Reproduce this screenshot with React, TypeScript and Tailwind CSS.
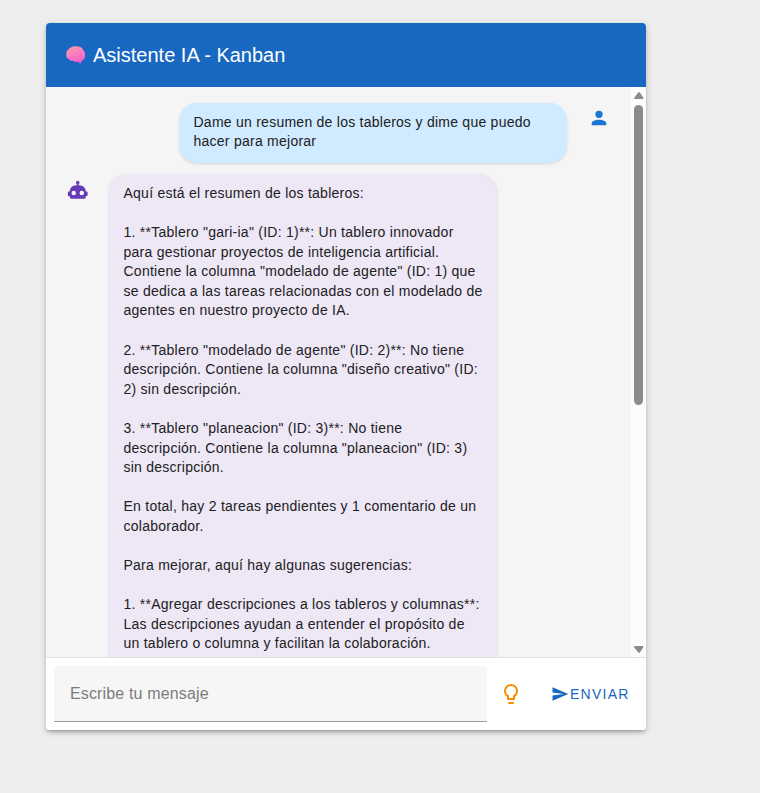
import React from "react";

const ACCOUNT =
  "M12,4A4,4 0 0,1 16,8A4,4 0 0,1 12,12A4,4 0 0,1 8,8A4,4 0 0,1 12,4M12,14C16.42,14 20,15.79 20,18V20H4V18C4,15.79 7.58,14 12,14Z";
const ROBOT =
  "M12,2A2,2 0 0,1 14,4C14,4.74 13.6,5.39 13,5.73V7H14A7,7 0 0,1 21,14H22A1,1 0 0,1 23,15V18A1,1 0 0,1 22,19H21V20A2,2 0 0,1 19,22H5A2,2 0 0,1 3,20V19H2A1,1 0 0,1 1,18V15A1,1 0 0,1 2,14H3A7,7 0 0,1 10,7H11V5.73C10.4,5.39 10,4.74 10,4A2,2 0 0,1 12,2M7.5,13A2.5,2.5 0 0,0 5,15.5A2.5,2.5 0 0,0 7.5,18A2.5,2.5 0 0,0 10,15.5A2.5,2.5 0 0,0 7.5,13M16.5,13A2.5,2.5 0 0,0 14,15.5A2.5,2.5 0 0,0 16.5,18A2.5,2.5 0 0,0 19,15.5A2.5,2.5 0 0,0 16.5,13Z";
const BULB =
  "M12,2A7,7 0 0,1 19,9C19,11.38 17.81,13.47 16,14.74V17A1,1 0 0,1 15,18H9A1,1 0 0,1 8,17V14.74C6.19,13.47 5,11.38 5,9A7,7 0 0,1 12,2M9,21V20H15V21A1,1 0 0,1 14,22H10A1,1 0 0,1 9,21M12,4A5,5 0 0,0 7,9C7,11.05 8.23,12.81 10,13.58V16H14V13.58C15.77,12.81 17,11.05 17,9A5,5 0 0,0 12,4Z";
const SEND = "M2,21L23,12L2,3V10L17,12L2,14V21Z";

function Icon({ path, className }: { path: string; className: string }) {
  return (
    <svg viewBox="0 0 24 24" className={className} fill="currentColor" aria-hidden="true">
      <path d={path} />
    </svg>
  );
}

function Brain() {
  return (
    <svg viewBox="0 0 20 18" className="h-[18px] w-[19.5px] shrink-0" aria-hidden="true">
      <defs>
        <linearGradient id="brain" x1="0.3" y1="0" x2="0.6" y2="1">
          <stop offset="0" stopColor="#f99aa9" />
          <stop offset="0.6" stopColor="#fb79c6" />
          <stop offset="1" stopColor="#f65bd2" />
        </linearGradient>
      </defs>
      <path
        fill="url(#brain)"
        d="M5 1.4C7 0 10-.1 12 .4C14.8.5 17 2 18 4.5C19.4 6 20 8.8 19.5 11C19 13 17.4 14.4 15.8 14.7L15.5 17.1Q14.7 18 13.8 17.3L12.7 15.8C10.8 16.4 8.2 16.2 7 14.9C5.2 15.3 3.6 14.6 3 13C1 12.8 0 10.6.4 8.5C0 5.5 1.3 3.6 3 3Q3.7 1.8 5 1.4Z"
      />
      <g fill="none" stroke="#ee55bd" strokeWidth="0.7" strokeLinecap="round" opacity="0.55">
        <path d="M3 6.2Q5 3.2 8.2 4.6M10.5 2.6Q13.3 2.2 14.3 5M7 8.3Q9 5.6 11.7 7Q14 8 16.3 6.2M3 11.6Q6.2 12.1 7.5 10.2Q10.2 12.4 13 10.2Q15.6 9 17.5 10.7M12.7 14.5Q13.6 12.2 16 12.4" />
      </g>
    </svg>
  );
}

const reply = `Aquí está el resumen de los tableros:

1. **Tablero "gari-ia" (ID: 1)**: Un tablero innovador
para gestionar proyectos de inteligencia artificial.
Contiene la columna "modelado de agente" (ID: 1) que
se dedica a las tareas relacionadas con el modelado de
agentes en nuestro proyecto de IA.

2. **Tablero "modelado de agente" (ID: 2)**: No tiene
descripción. Contiene la columna "diseño creativo" (ID:
2) sin descripción.

3. **Tablero "planeacion" (ID: 3)**: No tiene
descripción. Contiene la columna "planeacion" (ID: 3)
sin descripción.

En total, hay 2 tareas pendientes y 1 comentario de un
colaborador.

Para mejorar, aquí hay algunas sugerencias:

1. **Agregar descripciones a los tableros y columnas**:
Las descripciones ayudan a entender el propósito de
un tablero o columna y facilitan la colaboración.`;

const bubble =
  "w-[388px] shrink-0 whitespace-pre rounded-[18px] pl-[14.5px] pr-[13.5px] pt-[9.5px] text-[14px] leading-[19.6px] tracking-[0.25px] text-[#212121] shadow-[0_1px_3px_rgba(0,0,0,0.12)]";

export default function App() {
  return (
    <div className="h-[793px] w-full overflow-hidden bg-[#eeeeee] pl-[46px] pt-[23px] font-['Liberation_Sans',Arial,sans-serif]">
      <div className="flex h-[707px] w-[600px] flex-col overflow-hidden rounded bg-white shadow-[0_3px_3px_-2px_rgba(0,0,0,0.2),0_3px_4px_0_rgba(0,0,0,0.14),0_1px_8px_0_rgba(0,0,0,0.12)]">
        <header className="flex h-16 shrink-0 items-center gap-2 bg-[#1867c0] pl-[19.5px] text-white">
          <Brain />
          <h1 className="text-[20px] leading-8">Asistente IA - Kanban</h1>
        </header>

        <div className="flex h-[570px] shrink-0 bg-[#f5f5f5]">
          <main className="flex min-w-0 flex-1 flex-col gap-[11.6px] overflow-hidden px-4 pt-4">
            <div className="flex shrink-0 items-start justify-end gap-4">
              <div className={`${bubble} bg-[#d0eaff] pb-[11px]`}>
                {"Dame un resumen de los tableros y dime que puedo\nhacer para mejorar"}
              </div>
              <div className="flex h-[30px] w-8 items-center justify-center pr-[0.5px] text-[#1976d2]">
                <Icon path={ACCOUNT} className="size-[22px]" />
              </div>
            </div>
            <div className="flex shrink-0 items-start gap-[15px]">
              <div className="flex h-[30px] w-8 items-center justify-center pr-[0.5px] text-[#673ab7]">
                <Icon path={ROBOT} className="size-[21.5px]" />
              </div>
              <div className={`${bubble} bg-[#ede7f6] pb-10`}>{reply}</div>
            </div>
          </main>
          <div className="flex w-[15px] shrink-0 flex-col items-center bg-[#fcfcfc] pb-[4px] pt-[5px]">
            <svg viewBox="0 0 10 7" className="h-[7px] w-[10px]" fill="#8b8b8b">
              <path d="M5 0Q5.5 0 6 .7L9.2 5.5Q9.7 7 8.7 7H.8Q-.2 7 .3 5.5L4 .7Q4.5 0 5 0Z" />
            </svg>
            <div className="mt-[6px] h-[300px] w-[9px] rounded-full bg-[#8b8b8b]" />
            <svg viewBox="0 0 10 7" className="mt-auto h-[7px] w-[10px]" fill="#8b8b8b">
              <path d="M5 7Q5.5 7 6 6.3L9.2 1.5Q9.7 0 8.7 0H.8Q-.2 0 .3 1.5L4 6.3Q4.5 7 5 7Z" />
            </svg>
          </div>
        </div>

        <footer className="flex flex-1 items-start border-t border-[#e0e0e0] bg-white pl-2 pt-2">
          <div className="flex h-14 w-[433px] items-center rounded-t border-b border-[#9e9e9e] bg-[#f6f6f6] pl-4 text-[16px] tracking-[0.15px] text-[#7c7c7c]">
            Escribe tu mensaje
          </div>
          <button className="flex h-14 w-12 items-center justify-center text-[#fb8c00]" aria-label="Sugerencias">
            <Icon path={BULB} className="size-6" />
          </button>
          <button className="ml-4 flex h-14 items-center text-[14px] tracking-[1.25px] text-[#1867c0]">
            <Icon path={SEND} className="mr-[1px] size-[18px]" />
            ENVIAR
          </button>
        </footer>
      </div>
    </div>
  );
}
